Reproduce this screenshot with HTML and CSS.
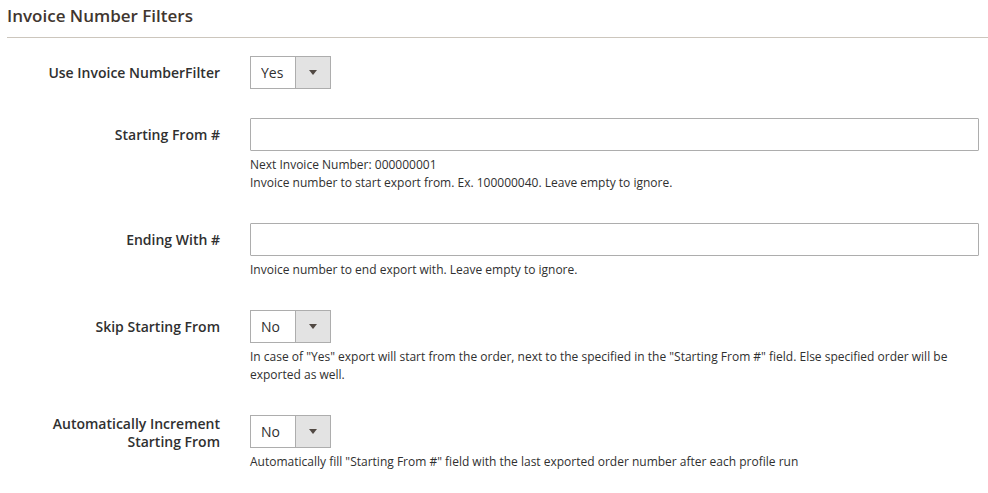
FILE: index.html
```html
<!DOCTYPE html>
<html lang="en">
<head>
	<meta charset="utf-8">
	<meta name="viewport" content="width=device-width, initial-scale=1.0" />
	<title>Invoice Number Filters</title>

	<link rel="stylesheet" href="styles.css">
</head>
<body>
	<fieldset class="section">
		<legend class="section-title">Invoice Number Filters</legend>

		<div class="field">
			<label class="field-label" for="use_filter">Use Invoice NumberFilter</label>
			<div class="field-control">
				<span class="select">
					<select id="use_filter">
						<option selected>Yes</option>
						<option>No</option>
					</select>
					<b class="select-arrow"></b>
				</span>
			</div>
		</div>

		<div class="field">
			<label class="field-label" for="starting_from">Starting From #</label>
			<div class="field-control">
				<input class="text-input" type="text" id="starting_from">
				<p class="note">Next Invoice Number: 000000001<br>Invoice number to start export from. Ex. 100000040. Leave empty to ignore.</p>
			</div>
		</div>

		<div class="field">
			<label class="field-label" for="ending_with">Ending With #</label>
			<div class="field-control">
				<input class="text-input" type="text" id="ending_with">
				<p class="note">Invoice number to end export with. Leave empty to ignore.</p>
			</div>
		</div>

		<div class="field">
			<label class="field-label" for="skip_start">Skip Starting From</label>
			<div class="field-control">
				<span class="select">
					<select id="skip_start">
						<option>Yes</option>
						<option selected>No</option>
					</select>
					<b class="select-arrow"></b>
				</span>
				<p class="note">In case of "Yes" export will start from the order, next to the specified in the "Starting From #" field. Else specified order will be exported as well.</p>
			</div>
		</div>

		<div class="field">
			<label class="field-label" for="auto_increment">Automatically Increment Starting From</label>
			<div class="field-control">
				<span class="select">
					<select id="auto_increment">
						<option>Yes</option>
						<option selected>No</option>
					</select>
					<b class="select-arrow"></b>
				</span>
				<p class="note">Automatically fill "Starting From #" field with the last exported order number after each profile run</p>
			</div>
		</div>
	</fieldset>
</body>
</html>
```

FILE: styles.css
```css
html {
	font: 14px/18px "Open Sans", "Liberation Sans", sans-serif;
	color: #303030;
}

body {
	margin: 0;
	background: #fff;
}

.section {
	margin: 0;
	padding: 0 0 0 7px;
	border: 0;
	min-width: 0;
}

.section-title {
	float: left; /* legend has to float to sit inside the box */
	width: 100%;
	padding: 6px 0 11px;
	font-size: 17px;
	line-height: 20px;
	font-weight: 600;
	color: #41362f;
	border-bottom: 1px solid #ccc6bd;
	margin-bottom: 18px;
}

.field {
	clear: both;
	display: grid;
	grid-template-columns: 213px 729px;
	column-gap: 30px;
	align-items: start;
	margin-bottom: 29px;
}

.field-label {
	min-height: 33px;
	display: flex;
	align-items: center;
	justify-content: flex-end;
	text-align: right;
	font-weight: 600;
	color: #303030;
}

.text-input {
	display: block;
	box-sizing: border-box;
	width: 100%;
	height: 33px;
	margin: 0;
	padding: 0 10px;
	border: 1px solid #adadad;
	border-radius: 1px;
	font: inherit;
	background: #fff;
}

.select {
	display: inline-flex;
	height: 33px;
	box-sizing: border-box;
	border: 1px solid #adadad;
	background: #fff;
	vertical-align: top;
}

.select select {
	appearance: none;
	-webkit-appearance: none;
	width: 44px;
	margin: 0;
	padding: 0 0 0 10px;
	border: 0;
	background: transparent;
	font: inherit;
	color: #303030;
	outline: none;
}

.select-arrow {
	position: relative;
	width: 34px;
	background: #e3e3e3;
	border-left: 1px solid #adadad;
}

/* small down triangle */
.select-arrow::after {
	content: "";
	position: absolute;
	left: 13px;
	top: 13px;
	border-style: solid;
	border-width: 5px 4px 0;
	border-color: #514943 transparent transparent;
}

.note {
	margin: 5px 0 2px;
	font-size: 12px;
	line-height: 18px;
	color: #303030;
}
```
